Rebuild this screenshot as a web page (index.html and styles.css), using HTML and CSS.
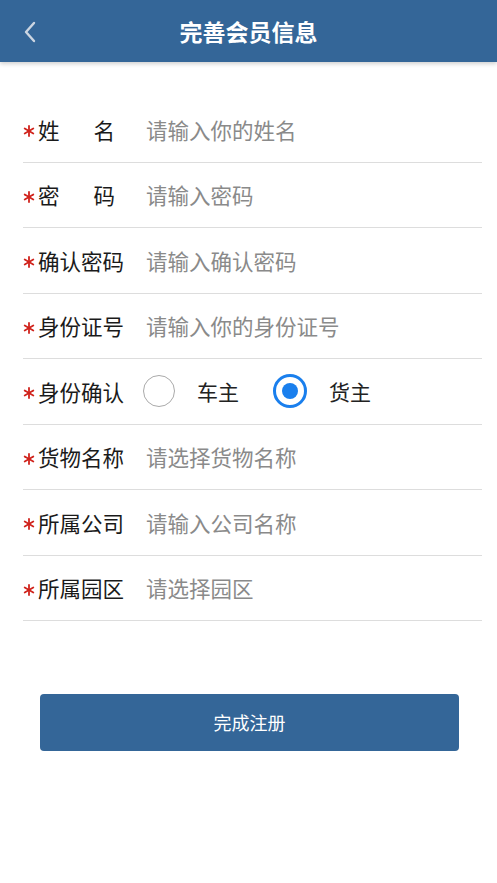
FILE: index.html
```html
<!DOCTYPE html>
<html lang="zh-CN">
<head>
    <meta charset="UTF-8">
    <meta name="viewport" content="width=device-width, initial-scale=1.0">
    <title>完善会员信息</title>
    <link rel="stylesheet" href="styles.css">
</head>
<body>
    <svg width="0" height="0" class="defs">
        <symbol id="star" viewBox="0 0 12 12">
            <g stroke="#d0231c" stroke-width="1.8" stroke-linecap="round">
                <line x1="6" y1="1" x2="6" y2="11"/>
                <line x1="1.7" y1="3.5" x2="10.3" y2="8.5"/>
                <line x1="1.7" y1="8.5" x2="10.3" y2="3.5"/>
            </g>
        </symbol>
    </svg>

    <div class="header">
        <a class="back">
            <svg width="14" height="22" viewBox="0 0 14 22">
                <path d="M11 2 L3 11 L11 20" fill="none" stroke="#ccd6e2" stroke-width="2.4" stroke-linecap="round" stroke-linejoin="round"/>
            </svg>
        </a>
        <h1 class="title">完善会员信息</h1>
    </div>

    <div class="form">
        <div class="row">
            <label class="label"><svg class="star"><use href="#star"/></svg><span class="spread">姓<i></i>名</span></label>
            <span class="placeholder">请输入你的姓名</span>
        </div>
        <div class="row">
            <label class="label"><svg class="star"><use href="#star"/></svg><span class="spread">密<i></i>码</span></label>
            <span class="placeholder">请输入密码</span>
        </div>
        <div class="row">
            <label class="label"><svg class="star"><use href="#star"/></svg>确认密码</label>
            <span class="placeholder">请输入确认密码</span>
        </div>
        <div class="row">
            <label class="label"><svg class="star"><use href="#star"/></svg>身份证号</label>
            <span class="placeholder">请输入你的身份证号</span>
        </div>
        <div class="row">
            <label class="label"><svg class="star"><use href="#star"/></svg>身份确认</label>
            <div class="radios">
                <span class="radio"></span><span class="radio_text">车主</span>
                <span class="radio checked"></span><span class="radio_text">货主</span>
            </div>
        </div>
        <div class="row">
            <label class="label"><svg class="star"><use href="#star"/></svg>货物名称</label>
            <span class="placeholder">请选择货物名称</span>
        </div>
        <div class="row">
            <label class="label"><svg class="star"><use href="#star"/></svg>所属公司</label>
            <span class="placeholder">请输入公司名称</span>
        </div>
        <div class="row">
            <label class="label"><svg class="star"><use href="#star"/></svg>所属园区</label>
            <span class="placeholder">请选择园区</span>
        </div>
    </div>

    <div class="btn">完成注册</div>
</body>
</html>
```

FILE: styles.css
```css
* {
    margin: 0;
    padding: 0;
    box-sizing: border-box;
}

body {
    font-family: "Noto Sans CJK SC", "Noto Sans", sans-serif;
    background-color: #fff;
    color: #222;
}

.defs {
    position: absolute;
}

.header {
    height: 62px;
    background-color: #346698;
    box-shadow: 0 2px 4px rgba(0, 0, 0, 0.18);
    display: flex;
    align-items: center;
    justify-content: center;
    position: relative;
}

.header .back {
    position: absolute;
    left: 23px;
    top: 21px;
}

.header .title {
    color: #fff;
    font-size: 23px;
    font-weight: bold;
}

.form {
    margin: 35px 15px 0 23px;
}

.form .row {
    display: flex;
    align-items: center;
    height: 65.5px;
    border-bottom: 1px solid #ddd;
}

.form .label {
    width: 123px;
    font-size: 21.5px;
    display: flex;
    align-items: center;
    color: #1a1a1a;
}

.label .star {
    width: 12px;
    height: 12px;
    margin-right: 3px;
    position: relative;
    top: 2px;
}

.label .spread {
    display: flex;
    width: 77px;
    justify-content: space-between;
}

.label .spread i {
    flex: 1;
}

.form .placeholder {
    font-size: 21.5px;
    color: #8a8a8a;
}

.radios {
    display: flex;
    align-items: center;
    margin-left: -3px;
}

.radio {
    width: 32px;
    height: 32px;
    border: 1.5px solid #aaa;
    border-radius: 50%;
    position: relative;
}

.radio.checked {
    width: 34px;
    height: 34px;
    border: 3px solid #1a7fed;
}

.radio.checked::after {
    content: "";
    position: absolute;
    left: 50%;
    top: 50%;
    width: 16px;
    height: 16px;
    margin: -8px 0 0 -8px;
    border-radius: 50%;
    background-color: #1a7fed;
}

.radio_text {
    font-size: 21px;
    margin-left: 22px;
    width: 76px;
}

.btn {
    margin: 73px 38px 0 40px;
    height: 57px;
    border-radius: 4px;
    background-color: #346698;
    color: #fff;
    font-size: 18px;
    text-align: center;
    line-height: 57px;
}
```
